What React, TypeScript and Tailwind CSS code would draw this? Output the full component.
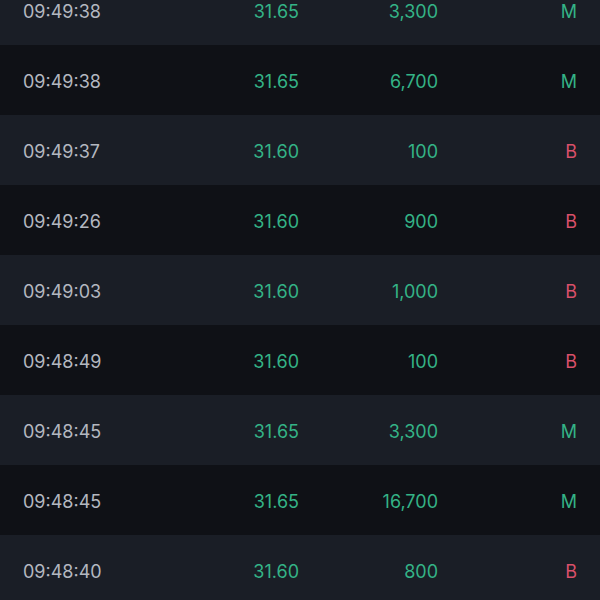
const trades = [
  { time: "09:49:38", price: "31.65", vol: "3,300", side: "M" },
  { time: "09:49:38", price: "31.65", vol: "6,700", side: "M" },
  { time: "09:49:37", price: "31.60", vol: "100", side: "B" },
  { time: "09:49:26", price: "31.60", vol: "900", side: "B" },
  { time: "09:49:03", price: "31.60", vol: "1,000", side: "B" },
  { time: "09:48:49", price: "31.60", vol: "100", side: "B" },
  { time: "09:48:45", price: "31.65", vol: "3,300", side: "M" },
  { time: "09:48:45", price: "31.65", vol: "16,700", side: "M" },
  { time: "09:48:40", price: "31.60", vol: "800", side: "B" },
];

export default function App() {
  return (
    <div className="h-[600px] w-[600px] overflow-hidden bg-[#0f1116] font-['Inter',sans-serif]">
      <div className="-mt-[25px]">
        {trades.map((t, i) => (
          <div
            key={i}
            className={`flex h-[70px] items-center pl-[23px] pr-[23px] pt-[2px] text-[18px] ${
              i % 2 === 0 ? "bg-[#1a1e26]" : "bg-[#0f1116]"
            }`}
          >
            <span className="w-[200px] text-[#b4b8c0]">{t.time}</span>
            <span className="w-[76px] text-right text-[#34b386]">{t.price}</span>
            <span className="w-[139px] text-right text-[#34b386]">{t.vol}</span>
            <span
              className={`w-[139px] text-right ${
                t.side === "M" ? "text-[#34b386]" : "text-[#d9506a]"
              }`}
            >
              {t.side}
            </span>
          </div>
        ))}
      </div>
    </div>
  );
}
